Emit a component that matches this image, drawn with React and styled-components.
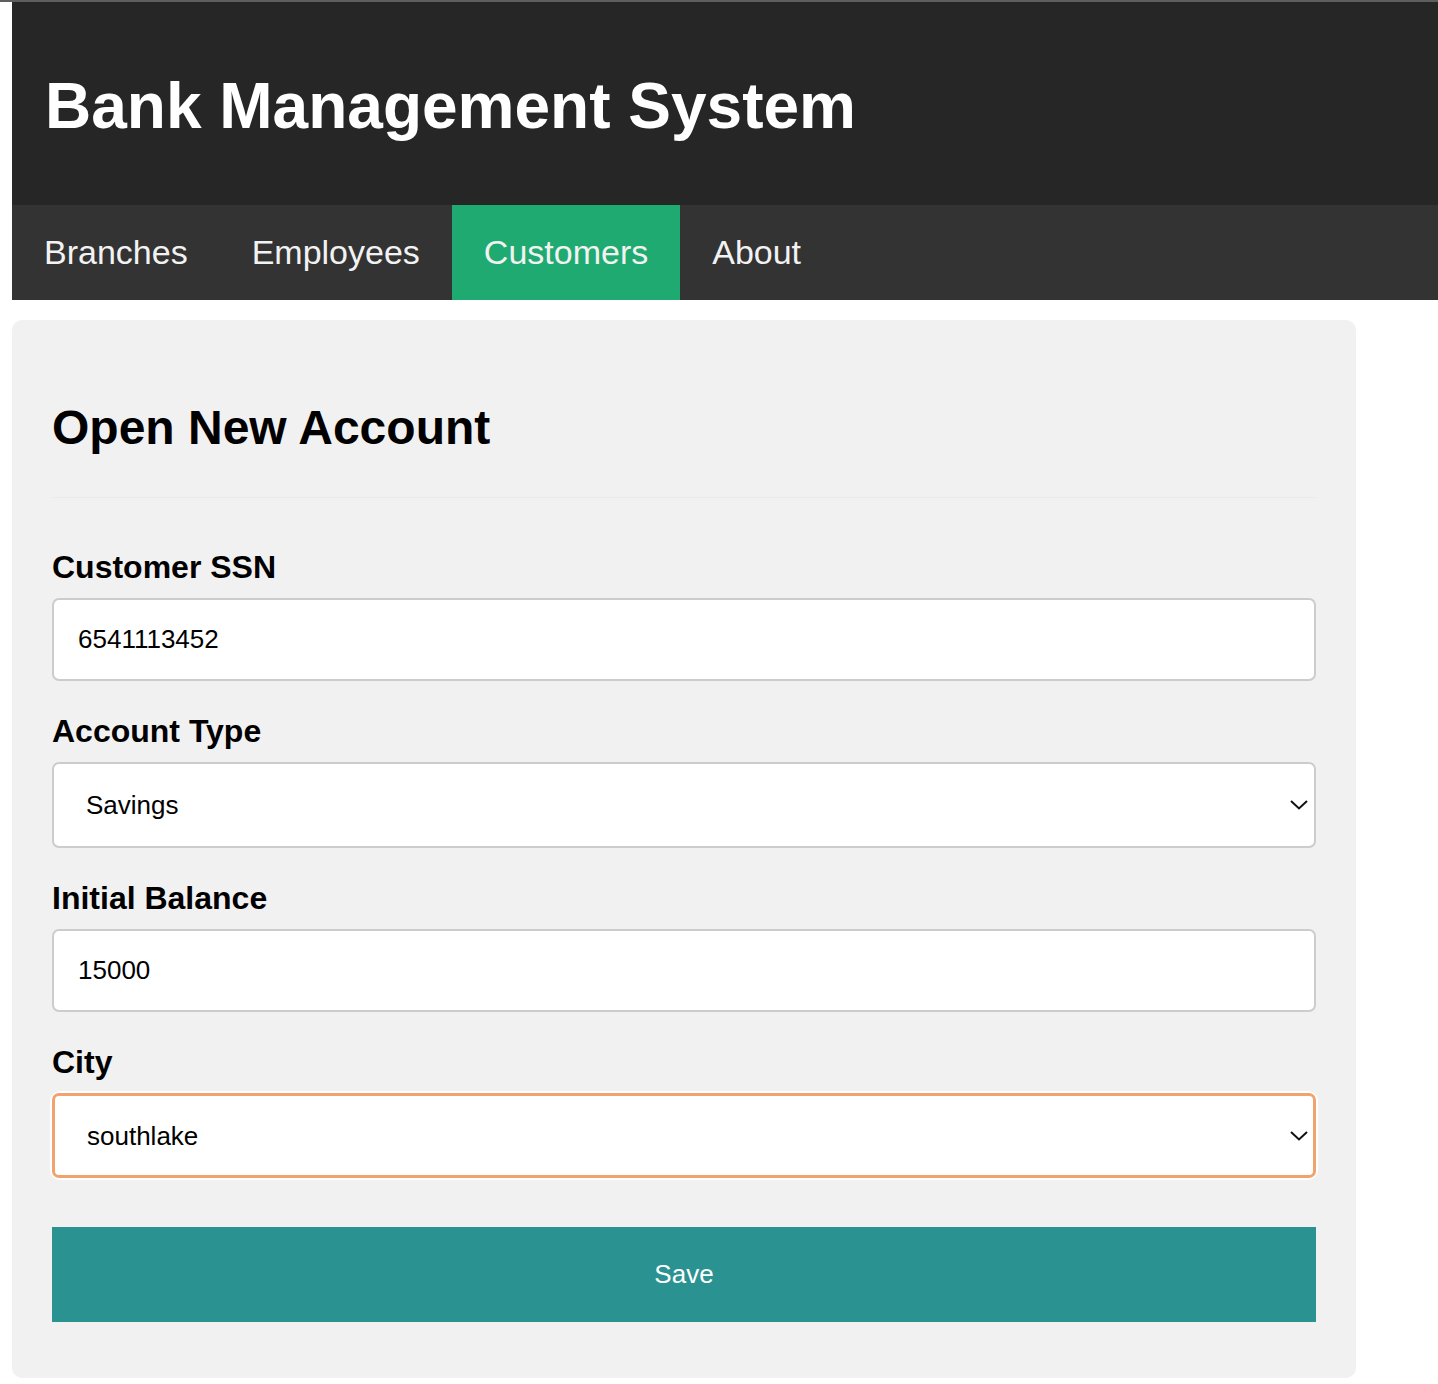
import React, { useState } from "react";
import styled, { createGlobalStyle } from "styled-components";

const GlobalStyle = createGlobalStyle`
  html, body {
    margin: 0;
    padding: 0;
    background: #ffffff;
  }
  body {
    border-top: 2px solid #5e5e5e;
    font-family: "Liberation Sans", Arial, Helvetica, sans-serif;
  }
`;

const Page = styled.div`
  padding-left: 12px;
`;

const Header = styled.header`
  background-color: #262626;
  padding: 67px 33px 62px;
`;

const Title = styled.h1`
  margin: 0;
  color: #ffffff;
  font-size: 64px;
  font-weight: 700;
`;

const Nav = styled.nav`
  display: flex;
  height: 95px;
  background-color: #333333;
`;

const NavItem = styled.a`
  display: flex;
  align-items: center;
  padding: 0 32px;
  font-size: 34px;
  color: #f2f2f2;
  text-decoration: none;
  background-color: ${(props) => (props.$active ? "#1eaa71" : "transparent")};
  cursor: pointer;
`;

const Card = styled.main`
  width: 1344px;
  box-sizing: border-box;
  margin-top: 20px;
  padding: 35px 40px 56px;
  background-color: #f1f1f1;
  border-radius: 10px;
`;

const Heading = styled.h2`
  margin: 45px 0 0;
  padding-bottom: 42px;
  border-bottom: 1px solid #eaeaea;
  font-size: 48px;
  font-weight: 700;
  color: #000;
`;

const Form = styled.form`
  display: flex;
  flex-direction: column;
  gap: 32px;
  margin-top: 51px;
`;

const Field = styled.div`
  display: flex;
  flex-direction: column;
  gap: 12px;
`;

const Label = styled.label`
  font-size: 32px;
  font-weight: 700;
  color: #000;
`;

const TextInput = styled.input`
  height: 83px;
  box-sizing: border-box;
  padding: 0 24px;
  font-family: inherit;
  font-size: 26px;
  color: #000;
  background: #fff;
  border: 2px solid #cccccc;
  border-radius: 7px;
  outline: none;
`;

const SelectWrap = styled.div`
  position: relative;
  height: ${(props) => (props.$focused ? "85px" : "86px")};
  box-sizing: border-box;
  border-radius: 8px;
  box-shadow: ${(props) => (props.$focused ? "0 0 0 2px #ffffff" : "none")};
`;

const Select = styled.select`
  width: 100%;
  height: 100%;
  box-sizing: border-box;
  padding: 0 60px 0 32px;
  appearance: none;
  font-family: inherit;
  font-size: 26px;
  color: #000;
  background: #fff;
  border: ${(props) => (props.$focused ? "3px solid #f1a36f" : "2px solid #cccccc")};
  border-radius: 7px;
  outline: none;
`;

const Chevron = styled.svg`
  position: absolute;
  right: 8px;
  top: 50%;
  margin-top: -5px;
  width: 18px;
  height: 10px;
  pointer-events: none;
`;

const SaveButton = styled.button`
  height: 95px;
  margin-top: 17px;
  border: none;
  background-color: #2a9290;
  color: #fff;
  font-family: inherit;
  font-size: 26px;
  cursor: pointer;
`;

const DropDown = ({ value, options, focused, onChange }) => (
  <SelectWrap $focused={focused}>
    <Select $focused={focused} value={value} onChange={onChange}>
      {options.map((o) => (
        <option key={o} value={o}>
          {o}
        </option>
      ))}
    </Select>
    <Chevron viewBox="0 0 18 10">
      <path d="M1 1 L9 8.5 L17 1" fill="none" stroke="#111" strokeWidth="2" />
    </Chevron>
  </SelectWrap>
);

const App = () => {
  const [ssn, setSsn] = useState("6541113452");
  const [type, setType] = useState("Savings");
  const [balance, setBalance] = useState("15000");
  const [city, setCity] = useState("southlake");

  return (
    <Page>
      <GlobalStyle />
      <Header>
        <Title>Bank Management System</Title>
      </Header>
      <Nav>
        <NavItem>Branches</NavItem>
        <NavItem>Employees</NavItem>
        <NavItem $active>Customers</NavItem>
        <NavItem>About</NavItem>
      </Nav>
      <Card>
        <Heading>Open New Account</Heading>
        <Form onSubmit={(e) => e.preventDefault()}>
          <Field>
            <Label>Customer SSN</Label>
            <TextInput value={ssn} onChange={(e) => setSsn(e.target.value)} />
          </Field>
          <Field>
            <Label>Account Type</Label>
            <DropDown
              value={type}
              options={["Savings", "Checking"]}
              onChange={(e) => setType(e.target.value)}
            />
          </Field>
          <Field>
            <Label>Initial Balance</Label>
            <TextInput
              value={balance}
              onChange={(e) => setBalance(e.target.value)}
            />
          </Field>
          <Field>
            <Label>City</Label>
            <DropDown
              focused
              value={city}
              options={["southlake", "dallas", "austin"]}
              onChange={(e) => setCity(e.target.value)}
            />
          </Field>
          <SaveButton type="submit">Save</SaveButton>
        </Form>
      </Card>
    </Page>
  );
};

export default App;
